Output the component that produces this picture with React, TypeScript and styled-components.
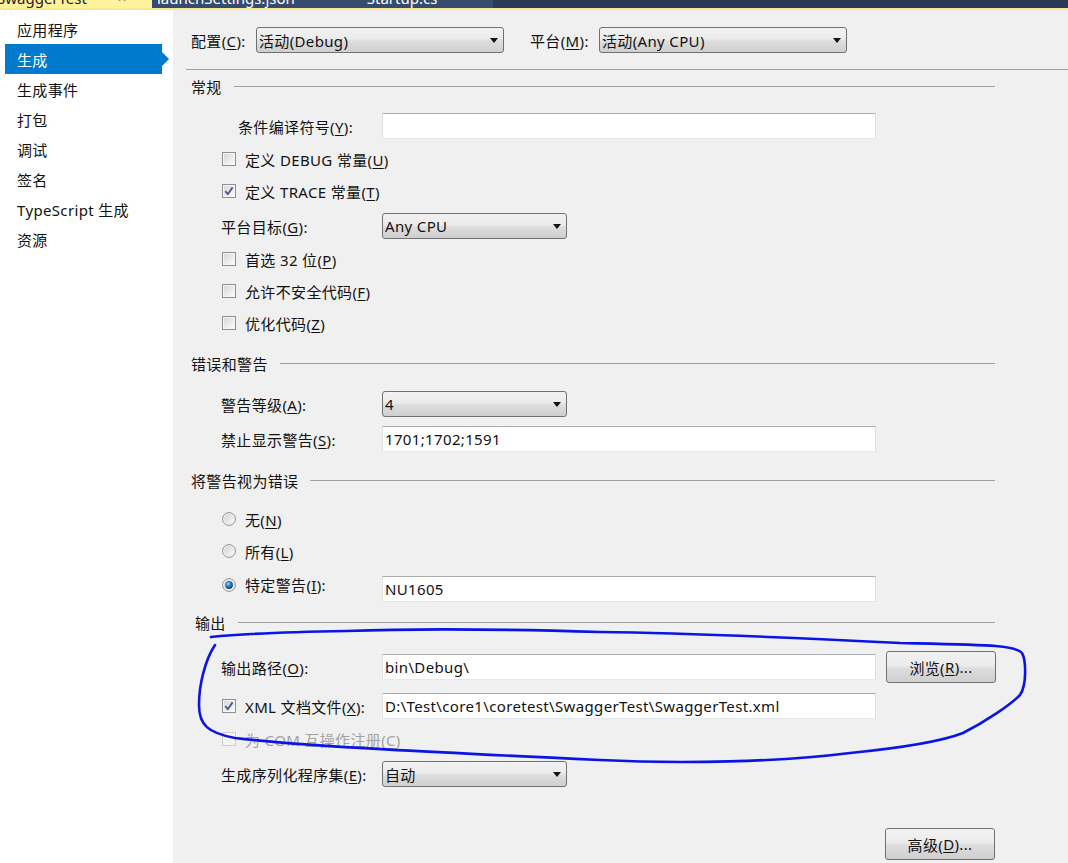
import React from "react";
import styled, { createGlobalStyle } from "styled-components";

const Global = createGlobalStyle`
  html, body { margin: 0; padding: 0; }
  body {
    font-family: "Noto Sans", "Noto Sans CJK SC", sans-serif;
    font-size: 15px;
    letter-spacing: 0.35px;
    color: #121212;
    background: #f0f0f0;
  }
  #root { width: 1068px; height: 863px; overflow: hidden; }
`;

const Root = styled.div`
  position: relative;
  width: 1068px;
  height: 863px;
  display: flex;
  flex-direction: column;
  overflow: hidden;
`;

const TopBar = styled.div`
  display: flex;
  height: 8px;
  background: #293956;
  border-bottom: 2px solid #f6e88f;
  overflow: hidden;
  flex-shrink: 0;
`;

const Tab = styled.div<{ $w: number; $bg: string; $fg: string; $pl: number }>`
  width: ${(p) => p.$w}px;
  background: ${(p) => p.$bg};
  color: ${(p) => p.$fg};
  padding-left: ${(p) => p.$pl}px;
  box-sizing: border-box;
  overflow: hidden;
  white-space: nowrap;
  display: flex;
  gap: 30px;
`;

const TabText = styled.span<{ $ml?: number }>`
  display: block;
  margin-top: -11px;
  margin-left: ${(p) => p.$ml ?? 0}px;
  line-height: 18px;
  font-size: 15px;
  letter-spacing: 0;
`;

const TabIcon = styled(TabText)`
  color: #8a8460;
  font-size: 12px;
`;

const Body = styled.div`
  flex: 1;
  display: flex;
`;

const Sidebar = styled.nav`
  width: 173px;
  background: #ffffff;
  padding-top: 4px;
  box-sizing: border-box;
  flex-shrink: 0;
`;

const NavItem = styled.div<{ $active?: boolean }>`
  position: relative;
  height: 30px;
  width: 157px;
  margin-left: 5px;
  padding-left: 12px;
  box-sizing: border-box;
  display: flex;
  align-items: center;
  background: ${(p) => (p.$active ? "#007acc" : "transparent")};
  color: ${(p) => (p.$active ? "#ffffff" : "#121212")};
  &::after {
    content: "";
    display: ${(p) => (p.$active ? "block" : "none")};
    position: absolute;
    left: 100%;
    top: 50%;
    margin-top: -7px;
    border-top: 7px solid transparent;
    border-bottom: 7px solid transparent;
    border-left: 7px solid #007acc;
  }
`;

const Content = styled.main`
  flex: 1;
  background: #f0f0f0;
  padding-top: 17px;
  display: flex;
  flex-direction: column;
`;

const TopRow = styled.div`
  display: flex;
  align-items: center;
  height: 26px;
  padding-left: 18px;
`;

const TopLabel = styled.span<{ $w: number; $ml?: number }>`
  width: ${(p) => p.$w}px;
  margin-left: ${(p) => p.$ml ?? 0}px;
  flex-shrink: 0;
`;

const Separator = styled.div`
  margin-top: 16px;
  margin-left: 13px;
  height: 1px;
  background: #a0a0a0;
`;

const Sections = styled.div`
  padding-left: 18px;
  width: 804px;
  display: flex;
  flex-direction: column;
`;

const SectionHeader = styled.div<{ $mt: number; $indent?: number }>`
  display: flex;
  align-items: center;
  height: 20px;
  margin-top: ${(p) => p.$mt}px;
  padding-left: ${(p) => p.$indent ?? 0}px;
  &::after {
    content: "";
    flex: 1;
    height: 1px;
    background: #a0a0a0;
    margin-left: 12px;
  }
`;

const Row = styled.div<{ $mt: number; $h?: number }>`
  display: flex;
  align-items: center;
  height: ${(p) => p.$h ?? 26}px;
  margin-top: ${(p) => p.$mt}px;
  padding-left: 30px;
  white-space: nowrap;
`;

const Label = styled.span<{ $indent?: number }>`
  width: 161px;
  padding-left: ${(p) => p.$indent ?? 0}px;
  box-sizing: border-box;
  flex-shrink: 0;
`;

const OptionGroup = styled.label<{ $w?: number; $disabled?: boolean; $lift?: number }>`
  display: flex;
  align-items: center;
  gap: 9px;
  padding-left: 1px;
  width: ${(p) => (p.$w ? `${p.$w}px` : "auto")};
  box-sizing: border-box;
  flex-shrink: 0;
  margin-bottom: ${(p) => p.$lift ?? 0}px;
  color: ${(p) => (p.$disabled ? "#a3a3a3" : "#121212")};
`;

const Key = styled.span`
  text-decoration: underline;
  text-underline-offset: 2px;
`;

const TextBox = styled.div<{ $w?: number }>`
  width: ${(p) => p.$w ?? 494}px;
  height: 26px;
  box-sizing: border-box;
  background: #ffffff;
  border: 1px solid;
  border-color: #abadb3 #dbdfe6 #e3e9ef #e2e3ea;
  padding-left: 2px;
  display: flex;
  align-items: center;
  flex-shrink: 0;
`;

const Select = styled.div<{ $w: number }>`
  width: ${(p) => p.$w}px;
  height: 26px;
  box-sizing: border-box;
  border: 1px solid #707070;
  border-radius: 3px;
  background: linear-gradient(#f2f2f2 0%, #ebebeb 45%, #dddddd 55%, #cfcfcf 100%);
  display: flex;
  align-items: center;
  justify-content: space-between;
  padding: 0 5px 0 2px;
  flex-shrink: 0;
  &::after {
    content: "";
    border-left: 4.5px solid transparent;
    border-right: 4.5px solid transparent;
    border-top: 5px solid #111;
  }
`;

const Button = styled.div<{ $ml?: number }>`
  width: 110px;
  height: 32px;
  box-sizing: border-box;
  border: 1px solid #707070;
  border-radius: 3px;
  background: linear-gradient(#f2f2f2 0%, #ebebeb 45%, #dddddd 55%, #cfcfcf 100%);
  display: flex;
  align-items: center;
  justify-content: center;
  margin-left: ${(p) => p.$ml ?? 0}px;
  flex-shrink: 0;
`;

const ButtonRow = styled.div<{ $mt: number }>`
  display: flex;
  justify-content: flex-end;
  margin-top: ${(p) => p.$mt}px;
  height: 33px;
`;

const Overlay = styled.svg`
  position: absolute;
  left: 0;
  top: 0;
  pointer-events: none;
`;

const CheckBox: React.FC<{ checked?: boolean; disabled?: boolean }> = ({ checked, disabled }) => (
  <svg width="14" height="14" viewBox="0 0 14 14" style={{ flexShrink: 0 }}>
    <defs>
      <linearGradient id="cbg" x1="0" y1="0" x2="1" y2="1">
        <stop offset="0" stopColor="#d8d8d8" />
        <stop offset="1" stopColor="#fbfbfb" />
      </linearGradient>
    </defs>
    <rect x="0.5" y="0.5" width="13" height="13" fill="#f6f6f6" stroke={disabled ? "#cdcdcd" : "#8e8f8f"} />
    <rect x="2" y="2" width="10" height="10" fill={disabled ? "#f4f4f4" : "url(#cbg)"} />
    {checked && (
      <path d="M3.3 7.2 L5.8 10.2 L10.6 3.4" stroke="#4a5b8c" strokeWidth="1.9" fill="none" strokeLinejoin="round" />
    )}
  </svg>
);

const Radio: React.FC<{ checked?: boolean }> = ({ checked }) => (
  <svg width="14" height="14" viewBox="0 0 14 14" style={{ flexShrink: 0 }}>
    <defs>
      <linearGradient id="rbg" x1="0" y1="0" x2="1" y2="1">
        <stop offset="0" stopColor="#d4d4d4" />
        <stop offset="1" stopColor="#fbfbfb" />
      </linearGradient>
      <radialGradient id="rdot" cx="0.4" cy="0.35" r="0.7">
        <stop offset="0" stopColor="#9fd6f5" />
        <stop offset="0.45" stopColor="#1f86c8" />
        <stop offset="1" stopColor="#0d3562" />
      </radialGradient>
    </defs>
    <circle cx="7" cy="7" r="6.4" fill="#f4f4f4" stroke="#8e8f8f" />
    <circle cx="7" cy="7" r="5" fill="url(#rbg)" />
    {checked && <circle cx="7" cy="7" r="3.9" fill="url(#rdot)" />}
  </svg>
);

const navItems = ["应用程序", "生成", "生成事件", "打包", "调试", "签名", "TypeScript 生成", "资源"];

export default function App() {
  return (
    <Root>
      <Global />
      <TopBar>
        <Tab $w={152} $bg="#fff29d" $fg="#1e1e1e" $pl={0}>
          <TabText $ml={-3}>SwaggerTest</TabText>
          <TabIcon>✕</TabIcon>
        </Tab>
        <Tab $w={341} $bg="#364b6e" $fg="#ffffff" $pl={5}>
          <TabText>launchSettings.json</TabText>
          <TabText $ml={42}>Startup.cs</TabText>
        </Tab>
      </TopBar>
      <Body>
        <Sidebar>
          {navItems.map((n) => (
            <NavItem key={n} $active={n === "生成"}>
              {n}
            </NavItem>
          ))}
        </Sidebar>
        <Content>
          <TopRow>
            <TopLabel $w={65}>
              配置(<Key>C</Key>):
            </TopLabel>
            <Select $w={248}>活动(Debug)</Select>
            <TopLabel $w={69} $ml={26}>
              平台(<Key>M</Key>):
            </TopLabel>
            <Select $w={248}>活动(Any CPU)</Select>
          </TopRow>
          <Separator />
          <Sections>
            <SectionHeader $mt={6}>常规</SectionHeader>
            <Row $mt={17}>
              <Label $indent={17}>
                条件编译符号(<Key>Y</Key>):
              </Label>
              <TextBox />
            </Row>
            <Row $mt={10} $h={20}>
              <OptionGroup>
                <CheckBox />
                <span>
                  定义 DEBUG 常量(<Key>U</Key>)
                </span>
              </OptionGroup>
            </Row>
            <Row $mt={12} $h={20}>
              <OptionGroup>
                <CheckBox checked />
                <span>
                  定义 TRACE 常量(<Key>T</Key>)
                </span>
              </OptionGroup>
            </Row>
            <Row $mt={12}>
              <Label>
                平台目标(<Key>G</Key>):
              </Label>
              <Select $w={185}>Any CPU</Select>
            </Row>
            <Row $mt={10} $h={20}>
              <OptionGroup>
                <CheckBox />
                <span>
                  首选 32 位(<Key>P</Key>)
                </span>
              </OptionGroup>
            </Row>
            <Row $mt={12} $h={20}>
              <OptionGroup>
                <CheckBox />
                <span>
                  允许不安全代码(<Key>F</Key>)
                </span>
              </OptionGroup>
            </Row>
            <Row $mt={12} $h={20}>
              <OptionGroup>
                <CheckBox />
                <span>
                  优化代码(<Key>Z</Key>)
                </span>
              </OptionGroup>
            </Row>

            <SectionHeader $mt={20}>错误和警告</SectionHeader>
            <Row $mt={18}>
              <Label>
                警告等级(<Key>A</Key>):
              </Label>
              <Select $w={185}>4</Select>
            </Row>
            <Row $mt={9}>
              <Label>
                禁止显示警告(<Key>S</Key>):
              </Label>
              <TextBox>1701;1702;1591</TextBox>
            </Row>

            <SectionHeader $mt={18}>将警告视为错误</SectionHeader>
            <Row $mt={19} $h={20}>
              <OptionGroup>
                <Radio />
                <span>
                  无(<Key>N</Key>)
                </span>
              </OptionGroup>
            </Row>
            <Row $mt={12} $h={20}>
              <OptionGroup>
                <Radio />
                <span>
                  所有(<Key>L</Key>)
                </span>
              </OptionGroup>
            </Row>
            <Row $mt={15}>
              <OptionGroup $w={161} $lift={9}>
                <Radio checked />
                <span>
                  特定警告(<Key>I</Key>):
                </span>
              </OptionGroup>
              <TextBox>NU1605</TextBox>
            </Row>

            <SectionHeader $mt={10} $indent={4}>
              输出
            </SectionHeader>
            <Row $mt={19} $h={32}>
              <Label>
                输出路径(<Key>O</Key>):
              </Label>
              <TextBox>bin\Debug\</TextBox>
              <Button $ml={10}>
                浏览(<Key>R</Key>)...
              </Button>
            </Row>
            <Row $mt={10}>
              <OptionGroup $w={161}>
                <CheckBox checked />
                <span>
                  XML 文档文件(<Key>X</Key>):
                </span>
              </OptionGroup>
              <TextBox>D:\Test\core1\coretest\SwaggerTest\SwaggerTest.xml</TextBox>
            </Row>
            <Row $mt={10} $h={20}>
              <OptionGroup $disabled>
                <CheckBox disabled />
                <span>
                  为 COM 互操作注册(<Key>C</Key>)
                </span>
              </OptionGroup>
            </Row>
            <Row $mt={12}>
              <Label>
                生成序列化程序集(<Key>E</Key>):
              </Label>
              <Select $w={185}>自动</Select>
            </Row>
            <ButtonRow $mt={41}>
              <Button>
                高级(<Key>D</Key>)...
              </Button>
            </ButtonRow>
          </Sections>
        </Content>
      </Body>
      <Overlay width="1068" height="863" viewBox="0 0 1068 863">
        <path
          d="M215,645 C205,660 199,685 199,705 C199,725 208,733 235,738 C300,746 450,753 600,760 C680,764 780,762 850,753 C900,748 940,742 963,733 C985,722 1010,705 1020,695 C1027,685 1026,660 1022,653 C1015,645 990,645 900,643 C800,638 700,633 600,632 C500,629 400,629 347,631 C290,632 240,634 211,637"
          fill="none"
          stroke="#0a14e6"
          strokeWidth="2.6"
          strokeLinecap="round"
          strokeLinejoin="round"
        />
      </Overlay>
    </Root>
  );
}
